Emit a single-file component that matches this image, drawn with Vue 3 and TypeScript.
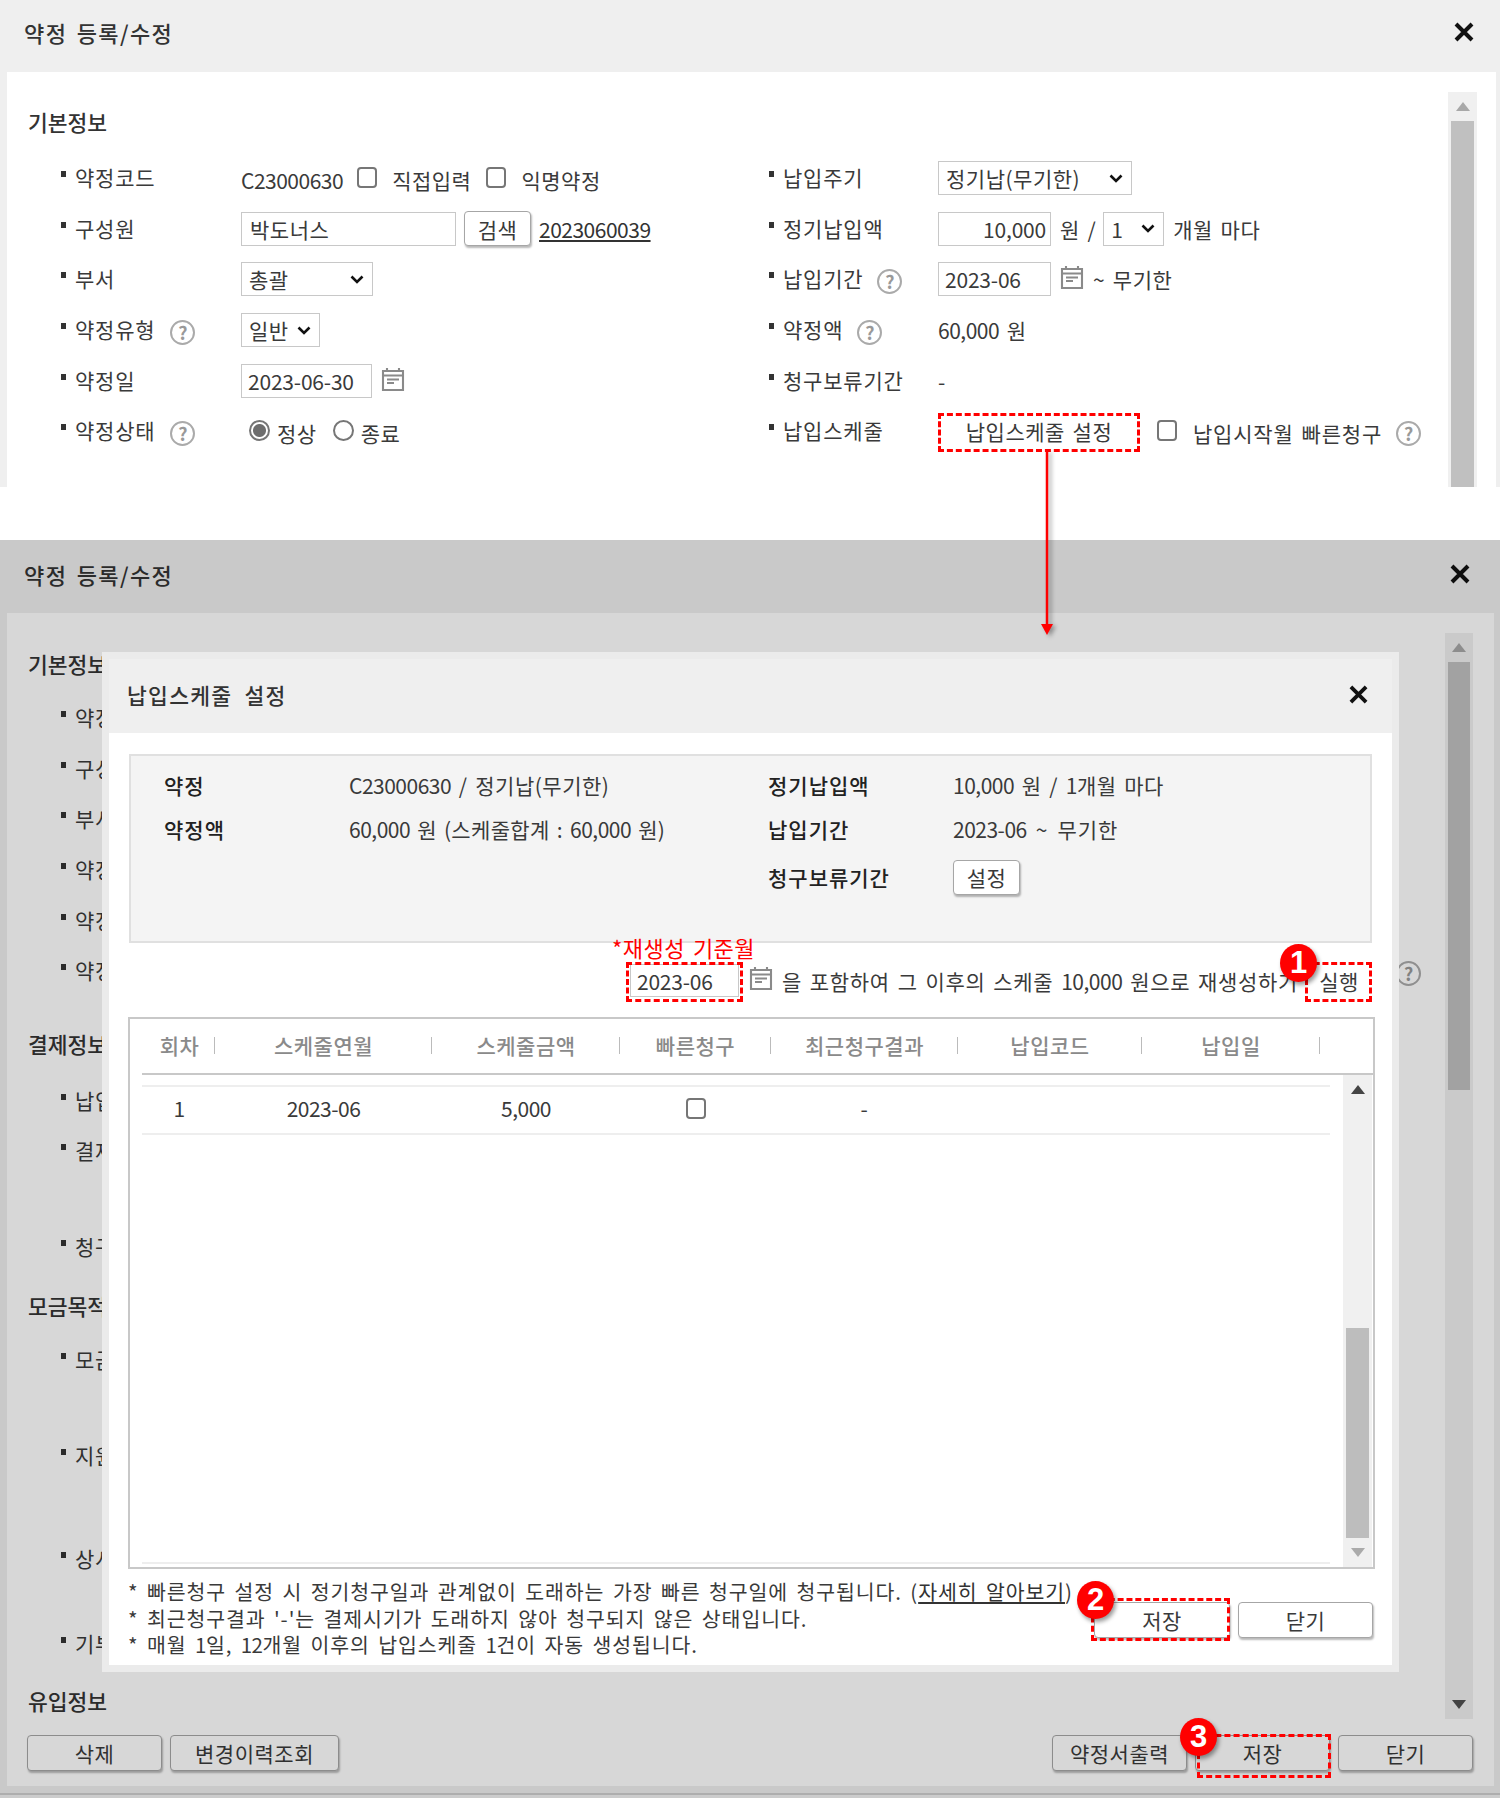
<script setup lang="ts">
interface Win { id: string; full: boolean }
const windows: Win[] = [
  { id: 'top', full: false },
  { id: 'bottom', full: true },
]
const pay = [
  { label: '납입방법', h: 50.6 },
  { label: '결제정보', h: 96 },
  { label: '청구일', h: 50.6 },
]
const purpose = [
  { label: '모금방법', h: 96 },
  { label: '지원대상', h: 103 },
  { label: '상시모금', h: 85 },
  { label: '기부금', h: 50.6 },
]
const cols = [
  { t: '회차', w: 71 },
  { t: '스케줄연월', w: 217 },
  { t: '스케줄금액', w: 188 },
  { t: '빠른청구', w: 151 },
  { t: '최근청구결과', w: 187 },
  { t: '납입코드', w: 184 },
  { t: '납입일', w: 178 },
]
const gridCols = cols.map((c) => c.w + 'px').join(' ')
</script>

<template>
  <div class="page">
    <section v-for="w in windows" :key="w.id" class="win" :class="w.id">
      <header class="head">
        <h1 class="title">약정 등록/수정</h1>
        <svg class="x" viewBox="0 0 20 20"><path d="M2 2 18 18M18 2 2 18" /></svg>
      </header>
      <div class="body">
        <div class="main">
          <div class="content">
            <h2 class="sec first">기본정보</h2>
            <div class="form">
              <div class="col">
                <div class="row">
                  <span class="lab"><span>약정코드</span></span>
                  <span class="num low">C23000630</span>
                  <input type="checkbox" class="cb c1" />
                  <span class="t1 low">직접입력</span>
                  <input type="checkbox" class="cb c2" />
                  <span class="t1 low">익명약정</span>
                </div>
                <div class="row">
                  <span class="lab"><span>구성원</span></span>
                  <input class="in w215" value="박도너스" readonly />
                  <button class="btn small s1">검색</button>
                  <a class="link num">2023060039</a>
                </div>
                <div class="row">
                  <span class="lab"><span>부서</span></span>
                  <select class="sel w132"><option>총괄</option></select>
                </div>
                <div class="row">
                  <span class="lab"><span>약정유형</span><i class="help">?</i></span>
                  <select class="sel w79"><option>일반</option></select>
                </div>
                <div class="row">
                  <span class="lab"><span>약정일</span></span>
                  <input class="in w131 num" value="2023-06-30" readonly />
                  <svg class="cal" viewBox="0 0 24 24"><path d="M2 4h20v19H2zM2 8.5h20M6 1v4M18 1v4M6 12.500h12M6 16h7" /></svg>
                </div>
                <div class="row">
                  <span class="lab"><span>약정상태</span><i class="help">?</i></span>
                  <input type="radio" class="rd r1" :name="w.id" checked />
                  <span class="t2 low">정상</span>
                  <input type="radio" class="rd r2" :name="w.id" />
                  <span class="t2 low">종료</span>
                </div>
              </div>
              <div class="col">
                <div class="row">
                  <span class="lab r"><span>납입주기</span></span>
                  <select class="sel w194"><option>정기납(무기한)</option></select>
                </div>
                <div class="row">
                  <span class="lab r"><span>정기납입액</span></span>
                  <input class="in w113 num right" value="10,000" readonly />
                  <span class="won">원 /</span>
                  <select class="sel w61"><option>1</option></select>
                  <span class="mon">개월 마다</span>
                </div>
                <div class="row">
                  <span class="lab r"><span>납입기간</span><i class="help">?</i></span>
                  <input class="in w113 num" value="2023-06" readonly />
                  <svg class="cal" viewBox="0 0 24 24"><path d="M2 4h20v19H2zM2 8.5h20M6 1v4M18 1v4M6 12.500h12M6 16h7" /></svg>
                  <span class="til">~ 무기한</span>
                </div>
                <div class="row">
                  <span class="lab r"><span>약정액</span><i class="help">?</i></span>
                  <span><span class="num">60,000</span> 원</span>
                </div>
                <div class="row">
                  <span class="lab r"><span>청구보류기간</span></span>
                  <span>-</span>
                </div>
                <div class="row">
                  <span class="lab r"><span>납입스케줄</span></span>
                  <span :class="w.id === 'top' ? 'mark m-sched' : ''">
                    <button class="btn sched">납입스케줄 설정</button>
                  </span>
                  <input type="checkbox" class="cb c3" />
                  <span class="t3 low">납입시작월 빠른청구</span>
                  <i class="help h3">?</i>
                </div>
              </div>
            </div>

            <template v-if="w.full">
              <h2 class="sec s-pay">결제정보</h2>
              <div v-for="r in pay" :key="r.label" class="row" :style="{ height: r.h + 'px' }">
                <span class="lab"><span>{{ r.label }}</span></span>
              </div>
              <h2 class="sec s-pur">모금목적</h2>
              <div v-for="r in purpose" :key="r.label" class="row" :style="{ height: r.h + 'px' }">
                <span class="lab"><span>{{ r.label }}</span></span>
              </div>
              <h2 class="sec s-in">유입정보</h2>
            </template>
          </div>

          <div class="sb">
            <div class="arr"><i class="up"></i></div>
            <div class="thumb"></div>
            <div class="rest"></div>
            <div class="arr"><i class="down"></i></div>
          </div>
        </div>

        <div v-if="w.full" class="bar">
          <div class="grp">
            <button class="btn b135">삭제</button>
            <button class="btn b169">변경이력조회</button>
          </div>
          <div class="grp">
            <button class="btn b135">약정서출력</button>
            <span class="mark m-save">
              <button class="btn b135">저장</button>
              <b class="badge bd3">3</b>
            </span>
            <button class="btn b135">닫기</button>
          </div>
        </div>
      </div>
      <div v-if="w.full" class="tail"></div>
      <div v-if="w.full" class="tail-line"></div>

      <div v-if="w.full" class="dim"></div>

      <div v-if="w.full" class="modal">
        <header class="m-head">
          <h3 class="m-title">납입스케줄 설정</h3>
          <svg class="x mx" viewBox="0 0 20 20"><path d="M2 2 18 18M18 2 2 18" /></svg>
        </header>
        <div class="m-body">
          <div class="info">
            <b>약정</b><span><span class="num">C23000630</span> / 정기납(무기한)</span>
            <b>정기납입액</b><span><span class="num">10,000</span> 원 / <span class="num">1</span>개월 마다</span>
            <b>약정액</b><span class="tight"><span class="num">60,000</span> 원 (스케줄합계 : <span class="num">60,000</span> 원)</span>
            <b>납입기간</b><span class="loose"><span class="num">2023-06</span> ~ 무기한</span>
            <span></span><span></span>
            <b>청구보류기간</b><span><button class="btn small">설정</button></span>
          </div>

          <div class="regen">
            <span class="mark m-month">
              <em class="redlabel">*재생성 기준월</em>
              <input class="in w109 num" value="2023-06" readonly />
            </span>
            <svg class="cal rcal" viewBox="0 0 24 24"><path d="M2 4h20v19H2zM2 8.5h20M6 1v4M18 1v4M6 12.500h12M6 16h7" /></svg>
            <span class="rtext">을 포함하여 그 이후의 스케줄 <span class="num">10,000</span> 원으로 재생성하기</span>
            <span class="mark m-run">
              <button class="btn run">실행</button>
              <b class="badge bd1">1</b>
            </span>
          </div>

          <div class="tbl">
            <div class="thead" :style="{ gridTemplateColumns: gridCols }">
              <div v-for="c in cols" :key="c.t" class="th">{{ c.t }}</div>
            </div>
            <div class="tmain">
              <div class="rows">
                <div class="tr" :style="{ gridTemplateColumns: gridCols }">
                  <span>1</span>
                  <span class="num">2023-06</span>
                  <span class="num">5,000</span>
                  <span><input type="checkbox" class="cb" /></span>
                  <span>-</span>
                  <span></span>
                  <span></span>
                </div>
              </div>
              <div class="sb inner">
                <div class="arr"><i class="up dark"></i></div>
                <div class="rest"></div>
                <div class="thumb"></div>
                <div class="arr"><i class="down light"></i></div>
              </div>
            </div>
          </div>

          <div class="m-foot">
            <div class="notes">
              <p>* 빠른청구 설정 시 정기청구일과 관계없이 도래하는 가장 빠른 청구일에 청구됩니다. (<a class="link">자세히 알아보기</a>)</p>
              <p>* 최근청구결과 '-'는 결제시기가 도래하지 않아 청구되지 않은 상태입니다.</p>
              <p>* 매월 <span class="num">1</span>일, <span class="num">12</span>개월 이후의 납입스케줄 <span class="num">1</span>건이 자동 생성됩니다.</p>
            </div>
            <div class="grp">
              <span class="mark m-save2">
                <button class="btn b136">저장</button>
                <b class="badge bd2">2</b>
              </span>
              <button class="btn b135">닫기</button>
            </div>
          </div>
        </div>
      </div>
    </section>

    <svg class="arrow" viewBox="0 0 14 186"><path d="M7 0V176" /><path class="head-a" d="M1 174h12l-6 11z" /></svg>
  </div>
</template>

<style>
html, body { margin: 0; background: #fff; }
</style>

<style scoped>
.page {
  position: relative;
  width: 1500px;
  height: 1798px;
  overflow: hidden;
  background: #fff;
  font-family: "Noto Sans CJK KR", "Noto Sans", sans-serif;
  font-size: 21px;
  letter-spacing: 0.5px;
  word-spacing: 2.5px;
  color: #3a3a3a;
}
.win { position: relative; overflow: hidden; background: #efefef; }
.win.top { height: 487px; margin-bottom: 53px; }
.win.bottom { height: 1258px; }
.head {
  height: 72px;
  display: flex;
  align-items: center;
  justify-content: space-between;
  padding: 0 26px 8px 24px;
  box-sizing: border-box;
}
.bottom .head { padding: 0 30px 6px 24px; height: 73px; }
.title { margin: 0; font-size: 22px; font-weight: 500; color: #333; letter-spacing: 1.4px; word-spacing: 3px; }
.m-title { margin: 0; font-size: 21.5px; font-weight: 500; color: #333; letter-spacing: 1.3px; word-spacing: 6px; }
.x { width: 20px; height: 20px; fill: none; stroke: #111; stroke-width: 4; }
.body { background: #fff; margin: 0 4px 0 7px; height: 415px; overflow: hidden; }
.bottom .body { margin-right: 6px; height: 1173px; }
.main { display: flex; }
.bottom .main { height: 1122px; }
.content { flex: 1; min-width: 0; padding-left: 21px; overflow: hidden; }
.sec { margin: 0; font-size: 21.5px; font-weight: 500; line-height: 30px; color: #333; letter-spacing: 0; }
.first { padding-top: 35px; margin-bottom: 16px; }
.bottom .first { padding-top: 36px; margin-bottom: 14px; }
.s-pay { margin-top: 32px; margin-bottom: 17px; }
.s-pur { margin-top: 18px; margin-bottom: 14px; }
.s-in { margin-top: 17px; }
.form { display: grid; grid-template-columns: 708px 1fr; padding-left: 32px; }
.s-pay ~ .row { margin-left: 32px; }
.row { display: flex; align-items: center; height: 50.6px; white-space: nowrap; }
.s-pay ~ .row { align-items: flex-start; }
.s-pay ~ .row .lab { height: 50.6px; }
.low { padding-top: 4px; }
.lab { display: flex; align-items: center; width: 181px; flex: none; }
.lab.r { width: 170px; }
.lab > span { font-size: 21px; letter-spacing: 0.8px; padding-bottom: 2px; }
.lab::before {
  content: "";
  width: 5px;
  height: 6px;
  background: #333;
  margin: 0 9px 8px 1px;
  flex: none;
}
.num { letter-spacing: -0.5px; }
.in.num { letter-spacing: -0.2px; }
.help {
  box-sizing: border-box;
  width: 25px;
  height: 25px;
  margin: 5px 0 0 15px;
  border: 2.5px solid #aaa;
  border-radius: 50%;
  color: #999;
  font-style: normal;
  font-size: 18px;
  font-weight: 700;
  line-height: 20px;
  text-align: center;
  letter-spacing: 0;
  flex: none;
  display: block;
}
.lab.r .help { margin-left: 14px; }
.cb {
  appearance: none;
  box-sizing: border-box;
  width: 20px;
  height: 21px;
  margin: 0 0 2px;
  border: 2px solid #767676;
  border-radius: 4px;
  background: #fff;
  flex: none;
  display: inline-block;
}
.c1 { margin-left: 14px; }
.c2 { margin-left: 15px; }
.c3 { margin-left: 17px; }
.t1 { margin-left: 15px; }
.t3 { margin-left: 16px; letter-spacing: 0.8px; }
.rd {
  appearance: none;
  box-sizing: border-box;
  width: 21px;
  height: 21px;
  margin: 0 0 1px;
  border: 2px solid #767676;
  border-radius: 50%;
  background: #fff;
  flex: none;
}
.rd:checked { background: radial-gradient(circle, #6e6e6e 0 6px, #fff 7px); }
.r1 { margin-left: 8px; }
.r2 { margin-left: 16px; }
.t2 { margin-left: 7px; }
.in, .sel {
  box-sizing: border-box;
  height: 34px;
  border: 1px solid #c8c8c8;
  background: #fff;
  font: inherit;
  letter-spacing: inherit;
  color: inherit;
  padding: 0 6px;
  margin: 0;
  outline: none;
  flex: none;
}
.right { text-align: right; padding-right: 4px; }
.w215 { width: 215px; padding-left: 8px; }
.w131 { width: 131px; }
.w113 { width: 113px; }
.w109 { width: 109px; height: 33px; display: block; }
.w132 { width: 132px; }
.w79 { width: 79px; }
.w194 { width: 194px; }
.w61 { width: 61px; }
.sel {
  appearance: none;
  padding: 0 3px 0 7px;
  background: #fff url("data:image/svg+xml,%3Csvg xmlns='http://www.w3.org/2000/svg' viewBox='0 0 14 9'%3E%3Cpath d='M1.500 1.500 7 7l5.500-5.500' fill='none' stroke='%23111' stroke-width='2.6'/%3E%3C/svg%3E") no-repeat right 8px center / 14px 9px;
}
.btn {
  box-sizing: border-box;
  height: 36px;
  background: #fff;
  border: 1.5px solid #a6a6a6;
  border-radius: 4px;
  box-shadow: 1px 2px 2px rgba(0, 0, 0, 0.28);
  font: inherit;
  letter-spacing: inherit;
  word-spacing: inherit;
  color: inherit;
  padding: 0;
  flex: none;
  display: block;
}
.small { width: 67px; height: 35px; }
.s1 { margin-left: 8px; }
.link { text-decoration: underline; color: #333; }
.row > .link { margin-left: 8px; }
.cal { width: 24px; height: 24px; fill: none; stroke: #8a8a8a; stroke-width: 2.1; flex: none; margin: 0 0 4px 9px; }
.won { margin-left: 9px; margin-right: 7px; }
.mon { margin-left: 9px; }
.til { margin-left: 9px; }
.sched { width: 198px; height: 34px; border: none; box-shadow: none; margin: 0 2px; }
.h3 { margin-left: 14px; }
.mark { position: relative; display: block; flex: none; }
.mark::after {
  content: "";
  position: absolute;
  border: 3.5px dashed #f00;
  z-index: 5;
  pointer-events: none;
}
.m-sched::after { inset: -1px 0 -4px 0; }
.m-save::after { inset: -1px -1px -7px 2px; }
.m-save2::after { inset: -4px 0 -3px -3px; }
.m-month::after { inset: -2px -4px -5px -4px; }
.m-run::after { inset: -2px 0 -4px -1px; }
.badge {
  position: absolute;
  z-index: 6;
  width: 37px;
  height: 38px;
  border-radius: 50%;
  background: #f00;
  color: #fff;
  font-family: "Liberation Sans", sans-serif;
  font-size: 31px;
  line-height: 38px;
  text-align: center;
  letter-spacing: 0;
  box-shadow: 2px 3px 4px rgba(0, 0, 0, 0.4);
}
.bd1 { left: -26px; top: -20px; }
.bd2 { left: -17px; top: -21px; }
.bd3 { left: -15px; top: -17px; }
.grp { display: flex; gap: 8px; align-items: flex-start; }
.b135 { width: 135px; }
.b136 { width: 136px; }
.b169 { width: 169px; }
.sb {
  width: 29px;
  flex: none;
  margin: 20px 19px 0 0;
  height: 395px;
  background: #f0f0f0;
  display: flex;
  flex-direction: column;
  box-sizing: border-box;
  padding: 0 3px;
}
.bottom .main > .sb { margin: 20px 21px 0 0; height: 1086px; width: 28px; }
.arr { height: 29px; display: flex; align-items: center; justify-content: center; flex: none; }
.up, .down { width: 0; height: 0; border-left: 7px solid transparent; border-right: 7px solid transparent; }
.up { border-bottom: 9px solid #a8a8a8; }
.down { border-top: 9px solid #505050; }
.up.dark { border-bottom-color: #444; }
.down.light { border-top-color: #aaa; }
.thumb { height: 428px; flex: none; background: #c0c0c0; }
.rest { flex: 1; }
.bar { display: flex; justify-content: space-between; padding: 0 21px 0 20px; }
.tail { height: 7px; }
.tail-line { height: 5px; box-sizing: border-box; border-top: 2px solid #cfcfcf; background: #f2f2f2; }
.dim {
  position: absolute;
  inset: 0;
  z-index: 1;
  background: rgba(0, 0, 0, 0.155);
}
.modal {
  position: absolute;
  z-index: 2;
  left: 102px;
  top: 112px;
  width: 1297px;
  height: 1020px;
  box-sizing: border-box;
  padding: 7px;
  background: #ebebeb;
  display: flex;
  flex-direction: column;
}
.m-head {
  height: 74px;
  box-sizing: border-box;
  flex: none;
  background: #efefef;
  display: flex;
  align-items: center;
  justify-content: space-between;
  padding: 0 24px 4px 18px;
}
.mx { width: 19px; height: 19px; }
.m-body { flex: 1; background: #fff; padding: 21px 20px 0 20px; min-height: 0; }
.info {
  box-sizing: border-box;
  height: 189px;
  border: 2px solid #e0e0e0;
  background: #f4f4f4;
  padding: 7px 0 0 33px;
  display: grid;
  grid-template-columns: 185px 419px 185px 1fr;
  grid-template-rows: 44px 43px 54px;
  align-items: center;
}
.info b { font-weight: 500; color: #222; letter-spacing: 1px; }
.tight { letter-spacing: 0.35px; word-spacing: 2px; }
.loose { word-spacing: 3.5px; letter-spacing: 0.9px; }
.regen {
  display: flex;
  align-items: center;
  justify-content: flex-end;
  height: 37px;
  margin: 19px 0 18px;
  white-space: nowrap;
}
.redlabel {
  position: absolute;
  left: -18px;
  top: -31px;
  font-style: normal;
  color: #f00;
  font-size: 22px;
  line-height: 28px;
  z-index: 6;
}
.rcal { margin: 0 0 6px 10px; }
.rtext { margin: 0 8px 0 9px; letter-spacing: 0.67px; }
.run { width: 66px; height: 34px; border: none; box-shadow: none; }
.tbl {
  box-sizing: border-box;
  width: 1247px;
  height: 552px;
  margin-left: -1px;
  border: 2px solid #c8c8c8;
  display: flex;
  flex-direction: column;
}
.thead {
  display: grid;
  height: 54px;
  margin-left: 12px;
  padding: 0 0 0 2px;
  border-bottom: 2px solid #c8c8c8;
  flex: none;
  box-sizing: content-box;
  color: #8a8a8a;
  font-weight: 500;
}
.th {
  display: flex;
  align-items: center;
  justify-content: center;
  position: relative;
  white-space: nowrap;
  padding-bottom: 3px;
}
.th::after {
  content: "";
  position: absolute;
  right: 0;
  top: 18px;
  width: 1.5px;
  height: 17px;
  background: #bbb;
}
.tmain { flex: 1; display: flex; min-height: 0; }
.rows {
  flex: 1;
  margin: 10px 13px 3px 12px;
  border-top: 2px solid #eee;
  border-bottom: 2px solid #eee;
}
.tr {
  display: grid;
  height: 48px;
  padding: 0 0 4px 2px;
  box-sizing: border-box;
  align-items: center;
  justify-items: center;
  border-bottom: 2px solid #eee;
}
.tr .cb { display: block; margin: 0; }
.sb.inner { height: auto; margin: 0 1px 0 0; }
.inner .thumb { height: 210px; background: #bdbdbd; }
.m-foot { display: flex; justify-content: space-between; margin-top: 9px; margin-right: -1px; }
.notes { font-size: 20.5px; letter-spacing: 0.9px; word-spacing: 3px; margin-left: -1px; }
.notes p { margin: 0; line-height: 26.500px; white-space: nowrap; }
.m-foot .grp { margin-top: 24px; }
.arrow {
  position: absolute;
  z-index: 10;
  left: 1040px;
  top: 450px;
  width: 14px;
  height: 186px;
  fill: none;
  stroke: #f00;
  stroke-width: 2.500;
  filter: drop-shadow(3px 2px 2px rgba(0, 0, 0, 0.35));
}
.head-a { fill: #f00; stroke: none; }
</style>
